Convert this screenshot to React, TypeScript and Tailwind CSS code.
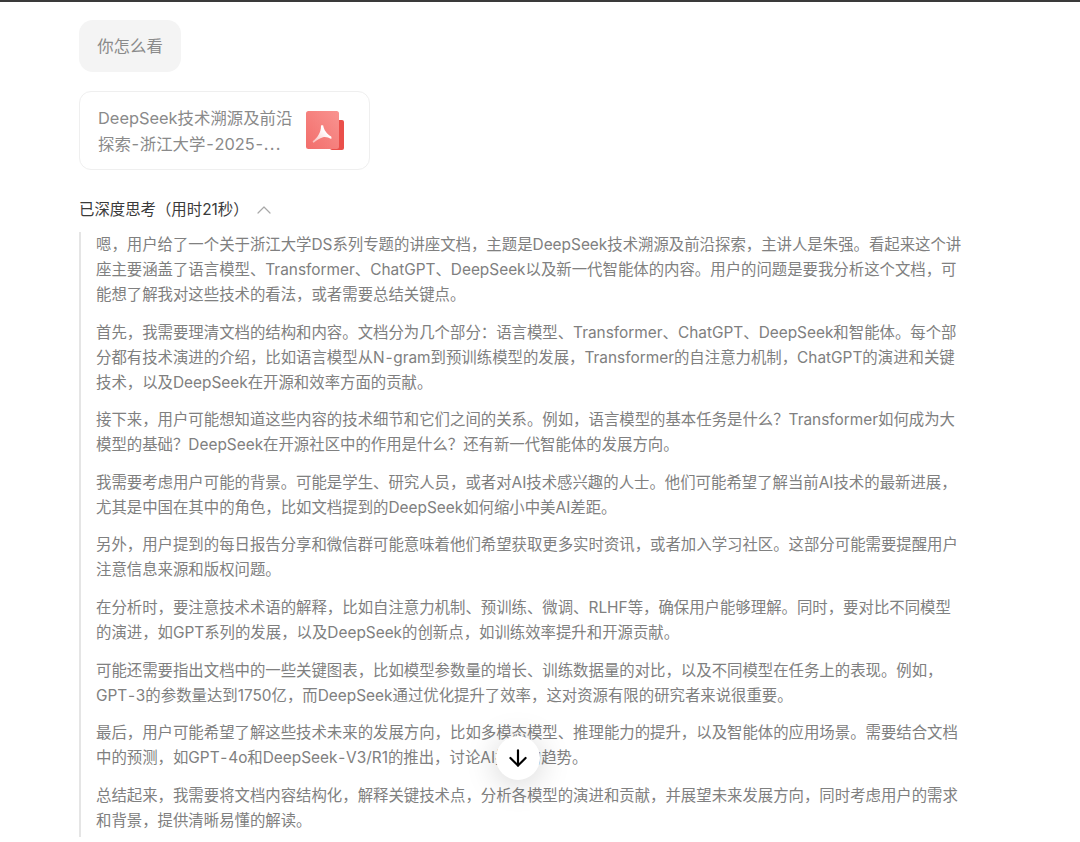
import { ArrowDown, ChevronUp } from "lucide-react";

const paragraphs = [
  [
    "嗯，用户给了一个关于浙江大学DS系列专题的讲座文档，主题是DeepSeek技术溯源及前沿探索，主讲人是朱强。看起来这个讲",
    "座主要涵盖了语言模型、Transformer、ChatGPT、DeepSeek以及新一代智能体的内容。用户的问题是要我分析这个文档，可",
    "能想了解我对这些技术的看法，或者需要总结关键点。",
  ],
  [
    "首先，我需要理清文档的结构和内容。文档分为几个部分：语言模型、Transformer、ChatGPT、DeepSeek和智能体。每个部",
    "分都有技术演进的介绍，比如语言模型从N-gram到预训练模型的发展，Transformer的自注意力机制，ChatGPT的演进和关键",
    "技术，以及DeepSeek在开源和效率方面的贡献。",
  ],
  [
    "接下来，用户可能想知道这些内容的技术细节和它们之间的关系。例如，语言模型的基本任务是什么？Transformer如何成为大",
    "模型的基础？DeepSeek在开源社区中的作用是什么？还有新一代智能体的发展方向。",
  ],
  [
    "我需要考虑用户可能的背景。可能是学生、研究人员，或者对AI技术感兴趣的人士。他们可能希望了解当前AI技术的最新进展，",
    "尤其是中国在其中的角色，比如文档提到的DeepSeek如何缩小中美AI差距。",
  ],
  [
    "另外，用户提到的每日报告分享和微信群可能意味着他们希望获取更多实时资讯，或者加入学习社区。这部分可能需要提醒用户",
    "注意信息来源和版权问题。",
  ],
  [
    "在分析时，要注意技术术语的解释，比如自注意力机制、预训练、微调、RLHF等，确保用户能够理解。同时，要对比不同模型",
    "的演进，如GPT系列的发展，以及DeepSeek的创新点，如训练效率提升和开源贡献。",
  ],
  [
    "可能还需要指出文档中的一些关键图表，比如模型参数量的增长、训练数据量的对比，以及不同模型在任务上的表现。例如，",
    "GPT-3的参数量达到1750亿，而DeepSeek通过优化提升了效率，这对资源有限的研究者来说很重要。",
  ],
  [
    "最后，用户可能希望了解这些技术未来的发展方向，比如多模态模型、推理能力的提升，以及智能体的应用场景。需要结合文档",
    "中的预测，如GPT-4o和DeepSeek-V3/R1的推出，讨论AI技术的趋势。",
  ],
  [
    "总结起来，我需要将文档内容结构化，解释关键技术点，分析各模型的演进和贡献，并展望未来发展方向，同时考虑用户的需求",
    "和背景，提供清晰易懂的解读。",
  ],
];

// Hyphens are wider in the original font
function Line({ text }: { text: string }) {
  return (
    <>
      {text.split("-").map((part, i) => (
        <span key={i}>
          {i > 0 && <span className="px-[0.75px]">-</span>}
          {part}
        </span>
      ))}
    </>
  );
}

function PdfIcon() {
  return (
    <svg width="38" height="40" viewBox="0 0 38 40" className="shrink-0">
      <defs>
        <linearGradient id="pdfFace" x1="1" y1="0" x2="0" y2="1">
          <stop offset="0" stopColor="#f99390" />
          <stop offset="1" stopColor="#f26e6b" />
        </linearGradient>
        <linearGradient id="pdfMark" x1="1" y1="0" x2="0" y2="1">
          <stop offset="0.35" stopColor="#fff" />
          <stop offset="1" stopColor="#fff" stopOpacity="0.5" />
        </linearGradient>
      </defs>
      <rect x="24" y="9" width="14" height="30" rx="2" fill="#ea4f4a" />
      <rect x="0" y="0" width="33" height="38" rx="2.5" fill="url(#pdfFace)" />
      <path
        d="M15 14.4C15.8 14.1 16.6 14.1 17.2 14.4C17.8 18.6 20.6 22.8 25.2 25.4C25.6 26.2 25.6 27.2 25.2 28C22.4 26.4 19.8 25.6 17 26.2C13.6 27 10.2 29.6 8 31.6C7 31.8 6.4 30.8 6.9 30C10.8 27.2 15.2 22 15 14.4Z"
        fill="url(#pdfMark)"
      />
    </svg>
  );
}

export default function App() {
  return (
    <div className="relative h-[842px] w-[1080px] overflow-hidden bg-white font-['Inter','Noto_Sans_CJK_SC',sans-serif]">
      <div className="h-[2px] bg-[#3a3a3a]" />

      <div className="pl-[79px] pt-[18px]">
        {/* User message */}
        <div className="flex h-[52px] w-[102px] items-center justify-center rounded-[14px] bg-[#f4f4f4] text-[16.4px] text-[#8a8a8a]">
          你怎么看
        </div>

        {/* Attachment */}
        <div className="mt-[19px] flex h-[79px] w-[291px] items-center justify-between rounded-[12px] border border-[#efefef] pl-[18px] pr-[25px]">
          <div className="w-[200px] text-[16.4px] leading-[26px] text-[#8a8a8a]">
            <div className="whitespace-nowrap">DeepSeek技术溯源及前沿</div>
            <div className="whitespace-nowrap">
              <Line text="探索-浙江大学-2025-" />
              <span className="tracking-[1.2px]">...</span>
            </div>
          </div>
          <PdfIcon />
        </div>

        {/* Thinking header */}
        <div className="mt-[28px] flex h-[24px] items-center text-[15.4px] text-[#3a3a3a]">
          <span>已深度思考（用时21秒）</span>
          <ChevronUp className="ml-[3px] h-6 w-6 text-[#a8a8a8]" strokeWidth={1.2} />
        </div>

        {/* Thinking body */}
        <div className="mt-[10px] flex h-[605px] flex-col gap-[12.6px] border-l-[2px] border-[#e5e5e5] pl-[15px] text-[15.4px] leading-[25px] text-[#808080]">
          {paragraphs.map((lines, i) => (
            <p key={i}>
              {lines.map((line, j) => (
                <span key={j} className="block whitespace-nowrap">
                  <Line text={line} />
                </span>
              ))}
            </p>
          ))}
        </div>
      </div>

      {/* Scroll to bottom */}
      <button className="absolute left-[496px] top-[736px] flex h-[44px] w-[44px] items-center justify-center rounded-full bg-white shadow-[0_4px_32px_rgba(0,0,0,0.18)]">
        <ArrowDown className="h-[26px] w-[26px] text-black" strokeWidth={2} />
      </button>
    </div>
  );
}
